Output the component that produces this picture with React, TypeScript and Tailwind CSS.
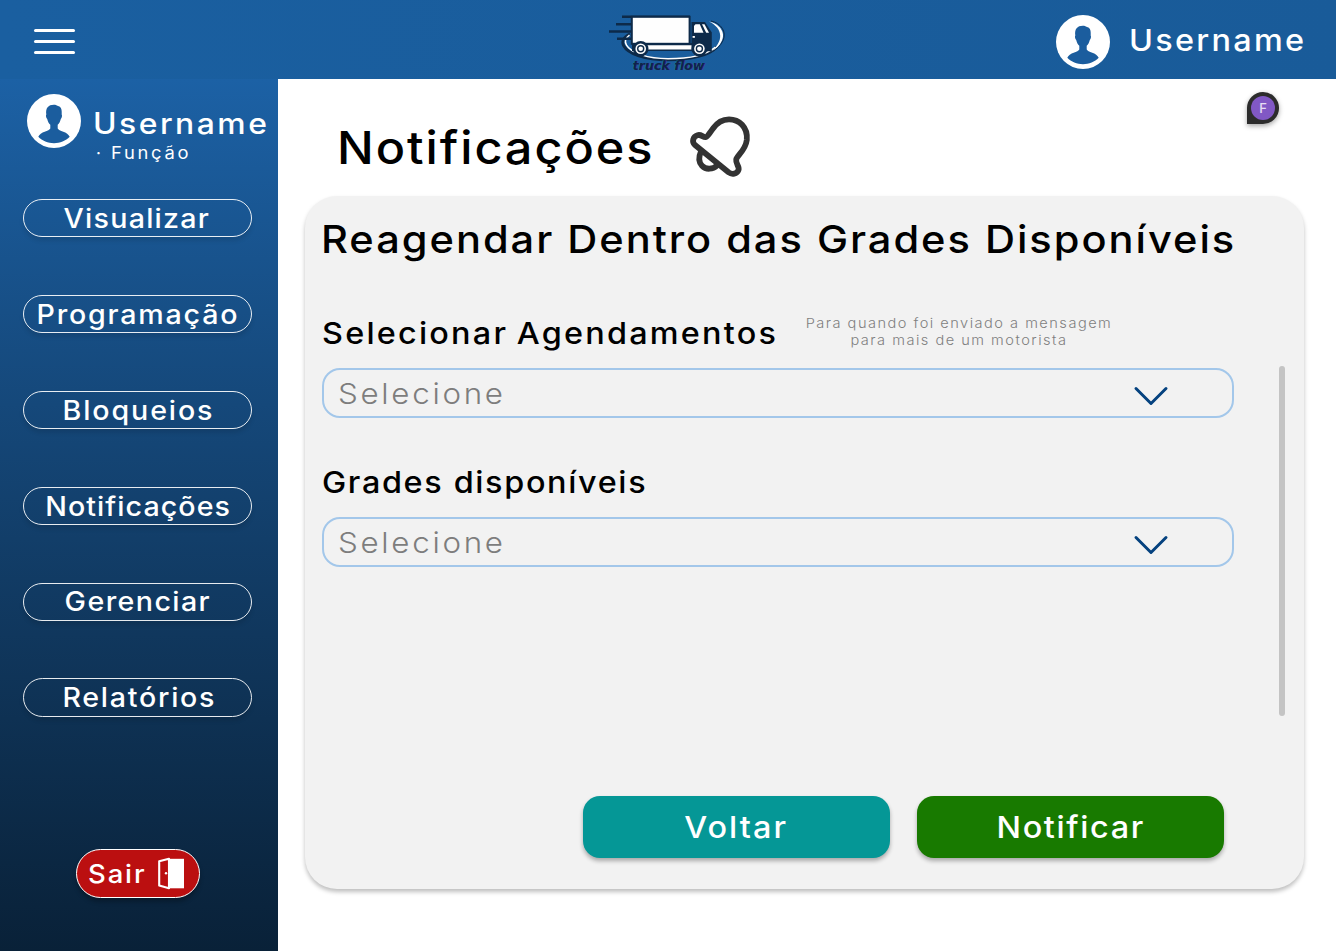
const navItems = [
  { label: "Visualizar", tracking: "tracking-[1.15px]" },
  { label: "Programação", tracking: "tracking-[1.65px] pl-[2px]" },
  { label: "Bloqueios", tracking: "tracking-[1.75px] pl-[3px]" },
  { label: "Notificações", tracking: "tracking-[0.98px] pl-[2px]" },
  { label: "Gerenciar", tracking: "tracking-[1.3px] pl-px" },
  { label: "Relatórios", tracking: "tracking-[1.6px] pl-[3px]" },
];

function Avatar() {
  return (
    <svg viewBox="0 0 54 54" className="size-[54px] shrink-0">
      <circle cx="27" cy="27" r="27" fill="#fff" />
      <path
        d="M26.8 10.8c2 0 3.2.6 4 1.2 3.2.3 4.300 3.200 3.900 8.600.7 1 .2 3.600-.9 4.400-.6 2.600-1.700 4.500-3.100 5.800v3.600c.7 2.500 10.200 3.200 12 8.400C38.800 47 33 49.200 27 49.200S15.200 47 11.300 42.800c1.800-5.200 11.300-5.900 12-8.400v-3.600c-1.400-1.300-2.500-3.200-3.100-5.800-1.100-.8-1.600-3.400-.9-4.400-.9-6.500 2-9.800 7.500-9.800Z"
        fill="#1b5d9e"
      />
    </svg>
  );
}

function Logo() {
  return (
    <svg viewBox="0 0 120 66" className="h-[66px] w-[120px]" fill="none">
      <path d="M22 22C15.500 25 13.500 29.500 15.500 33.500 20 42 37 47.800 60 47.800S102 43 108.500 35" stroke="#0d2a49" strokeWidth="2.800" />
      <path d="M21.500 23C17 26.500 16.500 30 18.500 33.200 23 41 40 46.700 60 46.700 82 46.700 99 42.500 107.500 35" stroke="#fff" strokeWidth="1.500" />
      <path d="M101 9.500C111 11.500 118 20 114 28.500 112 33.300 108 37.500 102 40.500 109 35 112.500 29 112.200 23.500 111.800 17.500 108 13 101 9.500Z" fill="#fff" />
      <path d="M103 9C113 11 119 20 115 28.500 112.500 34 108 38 102 40.500" stroke="#0d2a49" strokeWidth="1" />
      <path d="M14 4.800H82M8 12.200H25M1 19.500H25M9 26.700H25" stroke="#0d2a49" strokeWidth="2.400" />
      <rect x="23.800" y="4.800" width="57.800" height="27" fill="#fefefe" stroke="#0d2a49" strokeWidth="2" />
      <path d="M24 31H84V39H24Z" fill="#0d2a49" />
      <path d="M39 33.300H84V37.500H39Z" fill="#fff" />
      <path d="M83.500 10H97L103.800 20.500V39.300H83.500Z" fill="#0d2a49" />
      <path d="M87.500 12.300H91.800L95.500 20.700H86V13.800Z" fill="#fff" />
      <path d="M94 12.300H96.500L101 20.700H98.200Z" fill="#fff" />
      <rect x="84.600" y="24" width="2.300" height="1.800" fill="#fff" />
      <circle cx="32.700" cy="36.800" r="7.800" fill="#0d2a49" />
      <circle cx="32.700" cy="36.800" r="5.300" fill="#fff" />
      <circle cx="32.700" cy="36.800" r="3.700" fill="#0d2a49" />
      <circle cx="32.700" cy="36.800" r="2.300" fill="#fff" />
      <circle cx="91.400" cy="36.800" r="7.800" fill="#0d2a49" />
      <circle cx="91.400" cy="36.800" r="5.300" fill="#fff" />
      <circle cx="91.400" cy="36.800" r="3.700" fill="#0d2a49" />
      <circle cx="91.400" cy="36.800" r="2.300" fill="#fff" />
      <text
        x="24.500"
        y="58"
        textLength="72"
        lengthAdjust="spacingAndGlyphs"
        fill="#10224a"
        className="font-['DejaVu_Sans',sans-serif] text-[12.5px] font-bold italic [text-shadow:-0.5px_0_#168aa0,0.6px_0_#4a1f8f]"
      >
        truck flow
      </text>
    </svg>
  );
}

function Bell() {
  return (
    <svg viewBox="0 0 64 64" className="size-16" fill="none" stroke="#333" strokeWidth="5.800" strokeLinejoin="round" strokeLinecap="round">
      <path d="M7 30 40.500 57.300C44 60 49 59 50.500 55 51.800 51.500 47.500 49 48.200 44.500 49 40.500 57.500 35.500 58.800 25 60 12 51 4.300 41 4.300 33 4.300 28.500 8.500 25 13.500 21.500 18 20 21.500 18 22 15 22.800 13.500 19 9.500 20.200 5 21.500 3.500 27 7 30Z" />
      <path d="M13 36.500C10.500 42 10.500 47 14 50.800 18 55 25 54.500 29 50.500" />
    </svg>
  );
}

function Door() {
  return (
    <svg viewBox="0 0 27 33" className="h-[33px] w-[27px]">
      <path d="M11 1.800H26V31.300H11Z" fill="#fff" />
      <path d="M1.200 4.200 11 1.800V31.200L1.200 28.500Z" fill="#bb0f10" stroke="#fff" strokeWidth="2.100" strokeLinejoin="round" />
      <circle cx="8" cy="16.300" r="1.200" fill="#fff" />
    </svg>
  );
}

function Select() {
  return (
    <button className="flex h-[50px] w-[912px] items-center justify-between rounded-[18px] border-2 border-[#a3c7ea] pr-[63px] pl-[14px]">
      <span className="inline-block origin-left scale-x-[1.08] text-[29px] leading-none font-light tracking-[2.5px] text-[#7d7d7d]">Selecione</span>
      <svg viewBox="0 0 36 22" className="mt-[6px] h-[22px] w-[36px]" fill="none" stroke="#05427f" strokeWidth="3" strokeLinecap="round" strokeLinejoin="round">
        <path d="M3 3.500 18 18.500 33 3.500" />
      </svg>
    </button>
  );
}

export default function App() {
  return (
    <div className="flex h-[951px] w-[1336px] flex-col overflow-hidden bg-white font-['Inter',sans-serif] font-medium text-black">
      <header className="grid h-[79px] shrink-0 grid-cols-[1fr_auto_1fr] items-start bg-linear-to-r from-[#1a5fa0] to-[#195b99]">
        <button className="mt-[29px] ml-[34px] flex w-[41px] flex-col gap-[8px]" aria-label="Menu">
          <span className="h-[3px] w-full rounded-full bg-white" />
          <span className="h-[3px] w-full rounded-full bg-white" />
          <span className="h-[3px] w-full rounded-full bg-white" />
        </button>
        <div className="mt-[12px]">
          <Logo />
        </div>
        <div className="mt-[14.5px] flex justify-end pr-[35px]">
          <Avatar />
          <span className="ml-[19px] w-[172px] origin-left scale-x-[1.08] text-[30px] leading-[50px] tracking-[2.1px] whitespace-nowrap text-white">
            Username
          </span>
        </div>
      </header>

      <div className="flex min-h-0 flex-1">
        <aside className="flex w-[277.5px] shrink-0 flex-col bg-linear-to-b from-[#1c61a5] to-[#092138] text-white">
          <div className="mt-[15px] ml-[27px] flex h-[74px]">
            <Avatar />
            <div className="ml-[12px]">
              <p className="mt-[11px] origin-left scale-x-[1.08] text-[29.5px] leading-[36px] tracking-[2.3px]">Username</p>
              <p className="ml-[3px] flex text-[17px] leading-[24px] font-normal">
                <span className="w-[15px]">·</span>
                <span className="inline-block origin-left scale-x-[1.08] tracking-[2.5px]">Função</span>
              </p>
            </div>
          </div>
          <nav className="mt-[31px] ml-[23px] flex w-[228.5px] flex-col gap-[57.6px]">
            {navItems.map((item) => (
              <button
                key={item.label}
                className="flex h-[38.3px] items-center justify-center rounded-full border border-white/90 text-[26.5px] leading-none whitespace-nowrap shadow-[0_4px_4px_rgba(0,0,0,0.1)]"
              >
                <span className={`inline-block scale-x-[1.08] ${item.tracking}`}>{item.label}</span>
              </button>
            ))}
          </nav>
          <button className="mt-auto mb-[53px] ml-[76px] flex h-[49px] w-[123.5px] items-center rounded-full border border-white bg-[#bb0f10] pl-[10.5px] shadow-[0_4px_4px_rgba(0,0,0,0.25)]">
            <span className="w-[70px] origin-left scale-x-[1.08] text-left text-[25.5px] leading-none tracking-[1.7px]">Sair</span>
            <Door />
          </button>
        </aside>

        <main className="relative flex-1">
          <div className="absolute top-[13px] left-[969.5px] flex size-8 items-center justify-center rounded-full rounded-bl-[1px] bg-[#2c2c2c] shadow-[0_2px_5px_rgba(0,0,0,0.35)]">
            <span className="flex size-6 items-center justify-center rounded-full bg-[#8158c5] text-[13px] leading-none text-white/80">F</span>
          </div>

          <div className="ml-[59px] flex pt-[36px]">
            <h1 className="mt-[3px] w-[320px] origin-left scale-x-[1.08] text-[45px] leading-[60px] tracking-[1.8px] whitespace-nowrap">
              Notificações
            </h1>
            <div className="ml-[31px]">
              <Bell />
            </div>
          </div>

          <section className="mt-[17px] ml-[27.5px] flex h-[692.5px] w-[999px] flex-col rounded-[32px] bg-[#f2f2f2] pt-[19px] pl-[17px] shadow-[0_3px_4px_rgba(0,0,0,0.25)]">
            <h2 className="-ml-[1px] w-[912px] origin-left scale-x-[1.08] text-[38.5px] leading-[48px] tracking-[1.83px] whitespace-nowrap">
              Reagendar Dentro das Grades Disponíveis
            </h2>
            <div className="mt-[52px] flex">
              <div className="w-[912px]">
                <div className="flex h-[36px]">
                  <label className="w-[483px] shrink-0 origin-left scale-x-[1.08] text-[30px] leading-[36px] tracking-[2.05px] [word-spacing:-2px] whitespace-nowrap">
                    Selecionar Agendamentos
                  </label>
                  <p className="w-[308px] shrink-0 text-center text-[13.5px] leading-[17px] font-light whitespace-nowrap text-[#7f7f7f]">
                    <span className="-mx-4 inline-block scale-x-[1.08] tracking-[1.38px]">
                      Para quando foi enviado a mensagem
                      <br />
                      para mais de um motorista
                    </span>
                  </p>
                </div>
                <div className="mt-[17px]">
                  <Select />
                </div>
                <label className="mt-[46px] block origin-left scale-x-[1.08] text-[30px] leading-[36px] tracking-[1.52px]">Grades disponíveis</label>
                <div className="mt-[17px]">
                  <Select />
                </div>
              </div>
              <div className="mt-[51px] ml-[45px] h-[350px] w-[6px] rounded-full bg-[#c4c4c4]" />
            </div>
            <div className="mt-auto mr-[80.5px] mb-[31px] flex justify-end gap-[27px] text-[30px] leading-none text-white">
              <button className="h-[62px] w-[307px] rounded-[17px] bg-[#059796] shadow-[0_3px_4px_rgba(0,0,0,0.3)]">
                <span className="inline-block scale-x-[1.08] pl-px tracking-[1.9px]">Voltar</span>
              </button>
              <button className="h-[62px] w-[307px] rounded-[17px] bg-[#187a00] shadow-[0_3px_4px_rgba(0,0,0,0.3)]">
                <span className="inline-block scale-x-[1.08] pl-px tracking-[1.5px]">Notificar</span>
              </button>
            </div>
          </section>
        </main>
      </div>
    </div>
  );
}
